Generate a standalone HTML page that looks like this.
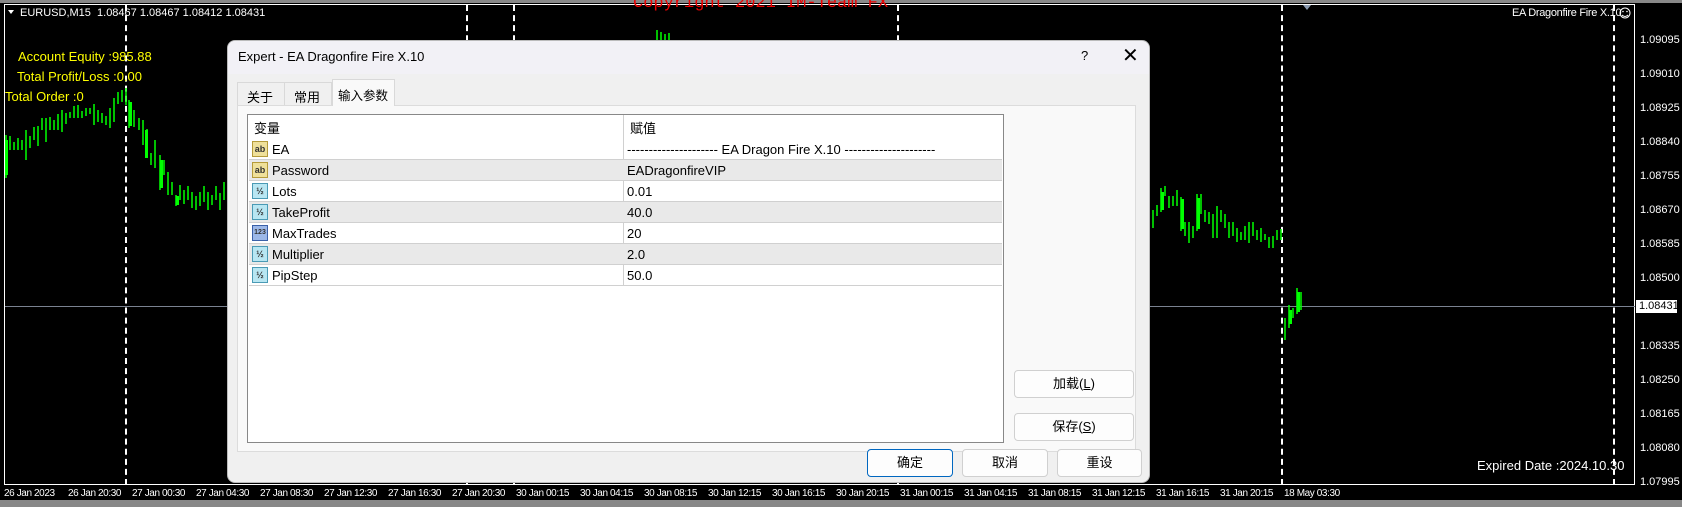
<!DOCTYPE html>
<html><head><meta charset="utf-8">
<style>
*{margin:0;padding:0;box-sizing:border-box}
body{width:1682px;height:507px;background:#000;position:relative;overflow:hidden;font-family:"Liberation Sans","Noto Sans CJK SC",sans-serif}
.a{position:absolute;white-space:nowrap}
.chart{position:absolute;left:4px;top:4px;width:1631px;height:481px;border:1px solid #fff;border-right-width:1px}
.yl{color:#ff0;font-size:13px}
.px{position:absolute;left:1640px;color:#fff;font-size:11px;line-height:12px}
.tl{position:absolute;top:488px;color:#fff;font-size:10px;letter-spacing:-0.4px;line-height:12px;white-space:nowrap}
.dl{position:absolute;top:5px;width:0;height:480px;border-left:2px dashed #fff}
.dlg{position:absolute;left:227px;top:40px;width:923px;height:443px;background:#f0f0f0;border-radius:8px;border:1px solid #bbb;overflow:hidden;font-size:12px;color:#000}
.title{position:absolute;left:0;top:0;width:100%;height:33px;background:#f2f1f6}
.tab{position:absolute;top:41px;height:24px;border:1px solid #d9d9d9;border-bottom:none;background:#f0f0f0;font-size:13px;padding:4px 0 0 9px;white-space:nowrap}
.panel{position:absolute;left:9px;top:64px;width:899px;height:347px;background:#f9f9f9;border:1px solid #dcdcdc}
.tbl{position:absolute;left:19px;top:73px;width:757px;height:329px;background:#fff;border:1px solid #888}
.row{position:absolute;left:1px;width:753px;height:21px;border-bottom:1px solid #d0d0d0;font-size:13px}
.row.g{background:#e9e9e9}
.row span{position:absolute;top:3px}
.ic{position:absolute;left:3px;top:2px;width:16px;height:16px;border:1px solid #b59b3a;background:#efe09a;font-size:9px;line-height:14px;text-align:center;font-weight:bold;color:#333}
.ic.n{border-color:#4a9ab5;background:#b8e6f2}
.ic.i{border-color:#3a60a8;background:#9cb8e8;font-size:7px}
.btn{position:absolute;height:28px;background:#fdfdfd;border:1px solid #d0d0d0;border-radius:4px;text-align:center;line-height:26px;font-size:13px}
</style></head><body>
<div style="position:absolute;left:0;top:0;width:1682px;height:3px;background:#888"></div>
<div style="position:absolute;left:0;top:500px;width:1682px;height:7px;background:#888"></div>
<div class="chart"></div>
<div style="position:absolute;left:5px;top:306px;width:1630px;height:1px;background:#7a8290"></div>
<div class="dl" style="left:125px"></div>
<div class="dl" style="left:466px"></div>
<div class="dl" style="left:513px"></div>
<div class="dl" style="left:897px"></div>
<div class="dl" style="left:1281px"></div>
<div class="dl" style="left:1613px"></div>
<svg class="a" style="left:0;top:0" width="1682" height="507">
<g fill="none" stroke="#00ff00" stroke-width="1.5">
<path d="M6 135V178M10 136V150M14 142V150M18 138V150M22 140V150M26 130V160M30 136V148M34 127V140M38 126V146M42 118V130M46 118V142M50 117V130M54 120V130M58 114V130M62 110V132M66 113V124M70 112V118M74 106V118M78 105V118M82 111V118M86 108V116M90 108V114M94 104V125M98 110V122M102 113V123M106 116V125M110 108V128M114 98V122M118 92V104M122 90V102M126 88V105M129 100V128M134 110V127M139 118V130M143 120V145M147 129V158M151 153V165M155 140V168M160 155V190M164 160V175M168 172V195M172 182V195M176 195V206M180 185V200M184 190V204M188 186V200M192 192V208M196 196V210M200 192V206M204 186V202M208 192V210M212 195V205M216 186V200M220 193V210M224 182V200"/>
<path d="M1153 210V228M1157 205V216M1161 188V212M1165 186V196M1169 196V208M1173 196V206M1177 190V206M1181 197V231M1185 222V236M1189 222V243M1193 226V238M1197 194V231M1201 194V214M1205 210V222M1209 212V224M1213 214V238M1217 206V238M1221 210V222M1225 214V228M1229 222V238M1233 222V236M1237 228V242M1241 232V240M1245 226V240M1249 222V243M1253 222V236M1257 230V240M1261 228V242M1265 234V240M1269 237V248M1273 236V248M1277 230V240M1281 229V240M1285 318V340M1289 305V328M1293 308V318M1297 288V314M1301 292V310"/>
<path d="M657 30V40M661 32V40M665 34V40M669 33V40"/>
</g>
<g fill="#00ff00">
<rect x="5" y="140" width="3" height="35"/><rect x="129" y="102" width="3" height="24"/><rect x="145" y="130" width="3" height="28"/><rect x="160" y="160" width="3" height="28"/><rect x="176" y="196" width="3" height="9"/><rect x="1161" y="192" width="3" height="18"/><rect x="1181" y="199" width="3" height="30"/><rect x="1197" y="198" width="3" height="31"/><rect x="1297" y="292" width="3" height="20"/><rect x="1289" y="310" width="3" height="14"/>
</g>
<path d="M8 10h6l-3 4z" fill="#fff"/>
<path d="M1303 5h8l-4 5z" fill="#8a9ab0"/>
<circle cx="1625" cy="13" r="5" fill="none" stroke="#fff"/><path d="M1622 15q3 3 6 0" stroke="#fff" fill="none"/><circle cx="1623" cy="11.5" r=".8" fill="#fff"/><circle cx="1627" cy="11.5" r=".8" fill="#fff"/>
</svg>
<div class="a" style="left:20px;top:7px;color:#fff;font-size:11px">EURUSD,M15&nbsp; 1.08467 1.08467 1.08412 1.08431</div>
<div class="a" style="left:633px;top:-6px;color:#e00;font-family:'Liberation Mono',monospace;font-size:17px">Copyright 2021 IM-Team FX</div>
<div class="a" style="left:1512px;top:7px;color:#fff;font-size:11px;letter-spacing:-0.3px">EA Dragonfire Fire X.10</div>
<div class="a yl" style="left:18px;top:49px">Account Equity :985.88</div>
<div class="a yl" style="left:17px;top:69px">Total Profit/Loss :0.00</div>
<div class="a yl" style="left:5px;top:89px">Total Order :0</div>
<div class="a" style="left:1477px;top:458px;color:#fff;font-size:13px">Expired Date :2024.10.30</div>

<div class="px" style="top:34px">1.09095</div><div class="px" style="top:68px">1.09010</div><div class="px" style="top:102px">1.08925</div><div class="px" style="top:136px">1.08840</div><div class="px" style="top:170px">1.08755</div><div class="px" style="top:204px">1.08670</div><div class="px" style="top:238px">1.08585</div><div class="px" style="top:272px">1.08500</div><div class="px" style="top:340px">1.08335</div><div class="px" style="top:374px">1.08250</div><div class="px" style="top:408px">1.08165</div><div class="px" style="top:442px">1.08080</div><div class="px" style="top:476px">1.07995</div>
<div class="a" style="left:1636px;top:300px;width:41px;height:13px;background:#fff;color:#000;font-size:11px;line-height:13px;padding-left:3px">1.08431</div>

<div class="tl" style="left:4px">26 Jan 2023</div><div class="tl" style="left:68px">26 Jan 20:30</div><div class="tl" style="left:132px">27 Jan 00:30</div><div class="tl" style="left:196px">27 Jan 04:30</div><div class="tl" style="left:260px">27 Jan 08:30</div><div class="tl" style="left:324px">27 Jan 12:30</div><div class="tl" style="left:388px">27 Jan 16:30</div><div class="tl" style="left:452px">27 Jan 20:30</div><div class="tl" style="left:516px">30 Jan 00:15</div><div class="tl" style="left:580px">30 Jan 04:15</div><div class="tl" style="left:644px">30 Jan 08:15</div><div class="tl" style="left:708px">30 Jan 12:15</div><div class="tl" style="left:772px">30 Jan 16:15</div><div class="tl" style="left:836px">30 Jan 20:15</div><div class="tl" style="left:900px">31 Jan 00:15</div><div class="tl" style="left:964px">31 Jan 04:15</div><div class="tl" style="left:1028px">31 Jan 08:15</div><div class="tl" style="left:1092px">31 Jan 12:15</div><div class="tl" style="left:1156px">31 Jan 16:15</div><div class="tl" style="left:1220px">31 Jan 20:15</div><div class="tl" style="left:1284px">18 May 03:30</div>

<div class="dlg">
 <div class="title"></div>
 <div class="a" style="left:10px;top:8px;font-size:13px">Expert - EA Dragonfire Fire X.10</div>
 <div class="a" style="left:853px;top:7px;font-size:13px">?</div>
 <div class="a" style="left:894px;top:2px;font-size:20px;font-weight:300">✕</div>
 <div class="tab" style="left:9px;width:48px">关于</div>
 <div class="tab" style="left:56px;width:48px">常用</div>
 <div class="panel"></div>
 <div class="tab" style="left:104px;top:38px;height:27px;width:63px;background:#f9f9f9;padding:5px 0 0 5px;font-size:12.5px">输入参数</div>
 <div class="tbl">
  <div class="a" style="left:6px;top:3px;font-size:13px">变量</div>
  <div class="a" style="left:382px;top:3px;font-size:13px">赋值</div>
  <div class="a" style="left:375px;top:0;width:1px;height:171px;background:#d0d0d0"></div>
  <div class="row" style="top:24px"><div class="ic">ab</div><span style="left:23px">EA</span><span style="left:378px">--------------------- EA Dragon Fire X.10 ---------------------</span></div>
  <div class="row g" style="top:45px"><div class="ic">ab</div><span style="left:23px">Password</span><span style="left:378px">EADragonfireVIP</span></div>
  <div class="row" style="top:66px"><div class="ic n">½</div><span style="left:23px">Lots</span><span style="left:378px">0.01</span></div>
  <div class="row g" style="top:87px"><div class="ic n">½</div><span style="left:23px">TakeProfit</span><span style="left:378px">40.0</span></div>
  <div class="row" style="top:108px"><div class="ic i">123</div><span style="left:23px">MaxTrades</span><span style="left:378px">20</span></div>
  <div class="row g" style="top:129px"><div class="ic n">½</div><span style="left:23px">Multiplier</span><span style="left:378px">2.0</span></div>
  <div class="row" style="top:150px"><div class="ic n">½</div><span style="left:23px">PipStep</span><span style="left:378px">50.0</span></div>
 </div>
 <div class="btn" style="left:786px;top:329px;width:120px">加载(<u>L</u>)</div>
 <div class="btn" style="left:786px;top:372px;width:120px">保存(<u>S</u>)</div>
 <div class="btn" style="left:639px;top:408px;width:86px;border:1px solid #0067c0">确定</div>
 <div class="btn" style="left:734px;top:408px;width:86px">取消</div>
 <div class="btn" style="left:829px;top:408px;width:85px">重设</div>
</div>
</body></html>
